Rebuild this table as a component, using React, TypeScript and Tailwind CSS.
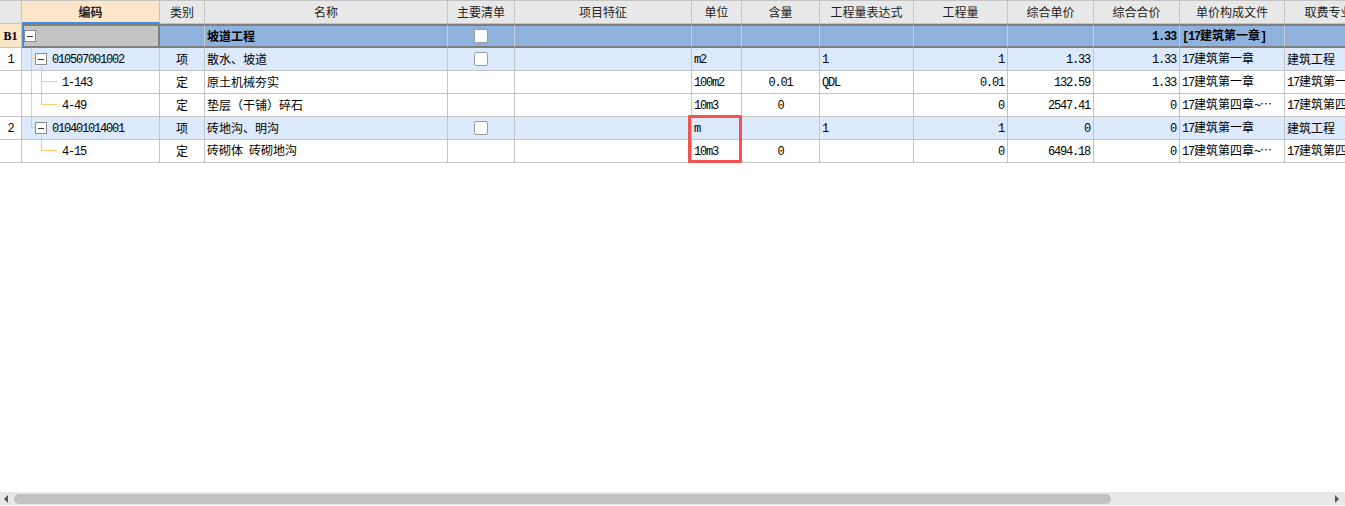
import React from "react";

const GRID =
  "grid grid-cols-[22px_138px_45px_243px_67px_177px_50px_78px_94px_94px_86px_86px_105px_88px]";

function T({ s, bold }: { s: string; bold?: boolean }) {
  const parts = s.match(/[\x20-\x7e]+|[^\x20-\x7e]+/g) || [];
  return (
    <span className="whitespace-pre">
      {parts.map((p, i) =>
        /[\x20-\x7e]/.test(p[0]) ? (
          <span
            key={i}
            className={
              bold
                ? "font-['Liberation_Mono'] font-bold tracking-[-1.2px]"
                : "font-['Liberation_Mono'] tracking-[-1.2px]"
            }
          >
            {p}
          </span>
        ) : (
          <span key={i} className={bold ? "font-bold" : ""}>
            {p}
          </span>
        )
      )}
    </span>
  );
}

function MinusBox() {
  return (
    <div className="w-[12px] h-[12px] shrink-0 bg-white border border-[#8c8c8c] flex items-center justify-center">
      <div className="w-[6px] h-[1px] bg-[#333]" />
    </div>
  );
}

function Check() {
  return <div className="w-[14px] h-[14px] bg-white border border-[#9c9c9c] rounded-[2px]" />;
}

type Row = {
  num: string;
  level: 1 | 2;
  code: string;
  type: string;
  name: string;
  check?: boolean;
  unit: string;
  qty: string;
  expr: string;
  amount: string;
  price: string;
  total: string;
  file: string;
  fee: string;
  item?: boolean;
  lines: { x1: number; y1: number; x2: number; y2: number }[];
};

const TR = 9.5;
const L2 = 19.5;
const CY = 10.5;

const rows: Row[] = [
  {
    num: "1",
    level: 1,
    code: "010507001002",
    type: "项",
    name: "散水、坡道",
    check: true,
    unit: "m2",
    qty: "",
    expr: "1",
    amount: "1",
    price: "1.33",
    total: "1.33",
    file: "17建筑第一章",
    fee: "建筑工程",
    item: true,
    lines: [
      { x1: TR, y1: 0, x2: TR, y2: 23 },
      { x1: TR, y1: CY, x2: 13, y2: CY },
      { x1: L2, y1: 17, x2: L2, y2: 23 },
    ],
  },
  {
    num: "",
    level: 2,
    code: "1-143",
    type: "定",
    name: "原土机械夯实",
    unit: "100m2",
    qty: "0.01",
    expr: "QDL",
    amount: "0.01",
    price: "132.59",
    total: "1.33",
    file: "17建筑第一章",
    fee: "17建筑第一章",
    lines: [
      { x1: TR, y1: 0, x2: TR, y2: 23 },
      { x1: L2, y1: 0, x2: L2, y2: 23 },
      { x1: L2, y1: CY, x2: 35, y2: CY },
    ],
  },
  {
    num: "",
    level: 2,
    code: "4-49",
    type: "定",
    name: "垫层（干铺）碎石",
    unit: "10m3",
    qty: "0",
    expr: "",
    amount: "0",
    price: "2547.41",
    total: "0",
    file: "17建筑第四章~…",
    fee: "17建筑第四章",
    lines: [
      { x1: TR, y1: 0, x2: TR, y2: 23 },
      { x1: L2, y1: 0, x2: L2, y2: CY },
      { x1: L2, y1: CY, x2: 35, y2: CY },
    ],
  },
  {
    num: "2",
    level: 1,
    code: "010401014001",
    type: "项",
    name: "砖地沟、明沟",
    check: true,
    unit: "m",
    qty: "",
    expr: "1",
    amount: "1",
    price: "0",
    total: "0",
    file: "17建筑第一章",
    fee: "建筑工程",
    item: true,
    lines: [
      { x1: TR, y1: 0, x2: TR, y2: CY },
      { x1: TR, y1: CY, x2: 13, y2: CY },
      { x1: L2, y1: 17, x2: L2, y2: 23 },
    ],
  },
  {
    num: "",
    level: 2,
    code: "4-15",
    type: "定",
    name: "砖砌体 砖砌地沟",
    unit: "10m3",
    qty: "0",
    expr: "",
    amount: "0",
    price: "6494.18",
    total: "0",
    file: "17建筑第四章~…",
    fee: "17建筑第四章",
    lines: [
      { x1: L2, y1: 0, x2: L2, y2: CY },
      { x1: L2, y1: CY, x2: 35, y2: CY },
    ],
  },
];

const headers = [
  "",
  "编码",
  "类别",
  "名称",
  "主要清单",
  "项目特征",
  "单位",
  "含量",
  "工程量表达式",
  "工程量",
  "综合单价",
  "综合合价",
  "单价构成文件",
  "取费专业",
];

export default function App() {
  const cell = "h-[23px] border-r border-b border-[#c4c4c4] flex items-center overflow-hidden whitespace-nowrap";
  const b1 =
    "h-[24px] border-r border-r-[#c8ccd4] border-t-2 border-b-2 border-t-[#7f7f7f] border-b-[#7f7f7f] flex items-center overflow-hidden whitespace-nowrap";
  return (
    <div className="w-full h-[506px] bg-white flex flex-col overflow-hidden text-[12px] leading-[14px] text-black font-['Noto_Sans_CJK_SC',sans-serif]">
      <div className="relative w-full overflow-hidden">
        <div className="w-[1373px]">
          {/* header */}
          <div className={GRID}>
            {headers.map((h, i) =>
              i === 1 ? (
                <div
                  key={i}
                  className="h-[24px] border-t border-t-[#c4c4c4] border-r border-r-[#c4c4c4] border-b-2 border-b-[#3a8ee6] bg-[#fee6c8] flex items-center justify-center font-bold text-[#222]"
                >
                  {h}
                </div>
              ) : (
                <div
                  key={i}
                  className="h-[24px] border-t border-r border-b border-[#c4c4c4] bg-[#e8e8e8] flex items-center justify-center text-[#222] overflow-hidden whitespace-nowrap"
                >
                  {h}
                </div>
              )
            )}
          </div>

          {/* B1 row */}
          <div className={GRID}>
            <div className="h-[24px] border-r border-b border-[#c4c4c4] bg-[#fee6c8] flex items-center justify-center">
              <span className="font-['Liberation_Serif'] font-bold text-[12px]">B1</span>
            </div>
            <div className="h-[24px] border-l-2 border-l-[#3a8ee6] border-r-2 border-r-[#7f7f7f] border-t-2 border-b-2 border-t-[#7f7f7f] border-b-[#7f7f7f] bg-[#c4c4c4] flex items-center">
              <MinusBox />
            </div>
            <div className={`${b1} bg-[#8fb2dd]`} />
            <div className={`${b1} bg-[#8fb2dd] pl-[2px]`}>
              <T s="坡道工程" bold />
            </div>
            <div className={`${b1} bg-[#8fb2dd] justify-center`}>
              <Check />
            </div>
            <div className={`${b1} bg-[#8fb2dd]`} />
            <div className={`${b1} bg-[#8fb2dd]`} />
            <div className={`${b1} bg-[#8fb2dd]`} />
            <div className={`${b1} bg-[#8fb2dd]`} />
            <div className={`${b1} bg-[#8fb2dd]`} />
            <div className={`${b1} bg-[#8fb2dd]`} />
            <div className={`${b1} bg-[#8fb2dd] justify-end pr-[3px]`}>
              <T s="1.33" bold />
            </div>
            <div className={`${b1} bg-[#8fb2dd] pl-[2px]`}>
              <T s="[17建筑第一章]" bold />
            </div>
            <div className={`${b1} bg-[#8fb2dd]`} />
          </div>

          {rows.map((r, ri) => {
            const bg = r.item ? "bg-[#dde9fc]" : "bg-white";
            return (
              <div key={ri} className={GRID}>
                <div className={`${cell} bg-white justify-center`}>
                  <T s={r.num} />
                </div>
                <div className={`${cell} ${bg} relative`}>
                  <svg
                    className="absolute left-0 top-0"
                    width="40"
                    height="23"
                    viewBox="0 0 40 23"
                    shapeRendering="crispEdges"
                  >
                    {r.lines.map((l, li) => (
                      <line
                        key={li}
                        x1={l.x1}
                        y1={l.y1}
                        x2={l.x2}
                        y2={l.y2}
                        stroke="#ffc878"
                        strokeWidth="1"
                      />
                    ))}
                  </svg>
                  {r.level === 1 ? (
                    <div className="flex items-center pl-[13px] relative">
                      <MinusBox />
                      <span className="ml-[5px]">
                        <T s={r.code} />
                      </span>
                    </div>
                  ) : (
                    <span className="pl-[40px] relative">
                      <T s={r.code} />
                    </span>
                  )}
                </div>
                <div className={`${cell} ${bg} justify-center`}>
                  <T s={r.type} />
                </div>
                <div className={`${cell} ${bg} pl-[2px]`}>
                  <T s={r.name} />
                </div>
                <div className={`${cell} ${bg} justify-center`}>{r.check ? <Check /> : null}</div>
                <div className={`${cell} ${bg}`} />
                <div className={`${cell} ${bg} pl-[2px]`}>
                  <T s={r.unit} />
                </div>
                <div className={`${cell} ${bg} justify-center`}>
                  <T s={r.qty} />
                </div>
                <div className={`${cell} ${bg} pl-[2px]`}>
                  <T s={r.expr} />
                </div>
                <div className={`${cell} ${bg} justify-end pr-[3px]`}>
                  <T s={r.amount} />
                </div>
                <div className={`${cell} ${bg} justify-end pr-[3px]`}>
                  <T s={r.price} />
                </div>
                <div className={`${cell} ${bg} justify-end pr-[3px]`}>
                  <T s={r.total} />
                </div>
                <div className={`${cell} ${bg} pl-[2px]`}>
                  <T s={r.file} />
                </div>
                <div className={`${cell} ${bg} pl-[2px]`}>
                  <T s={r.fee} />
                </div>
              </div>
            );
          })}
        </div>
        {/* highlight annotation */}
        <div className="absolute left-[688px] top-[115px] w-[54px] h-[48px] border-[3px] border-[#f25252] rounded-[1px] pointer-events-none" />
      </div>

      <div className="flex-1" />

      {/* horizontal scrollbar */}
      <div className="h-[13px] bg-[#e8e8e8] flex items-center relative">
        <svg className="absolute left-[4px] top-[3px]" width="5" height="8" viewBox="0 0 5 8">
          <polygon points="4,0 4,8 0,4" fill="#555" />
        </svg>
        <div className="ml-[14px] w-[1097px] h-[10px] rounded-full bg-[#c1c1c1]" />
        <svg className="absolute right-[5px] top-[3px]" width="5" height="8" viewBox="0 0 5 8">
          <polygon points="0,0 0,8 4,4" fill="#555" />
        </svg>
      </div>
      <div className="h-[1px] bg-white" />
    </div>
  );
}
